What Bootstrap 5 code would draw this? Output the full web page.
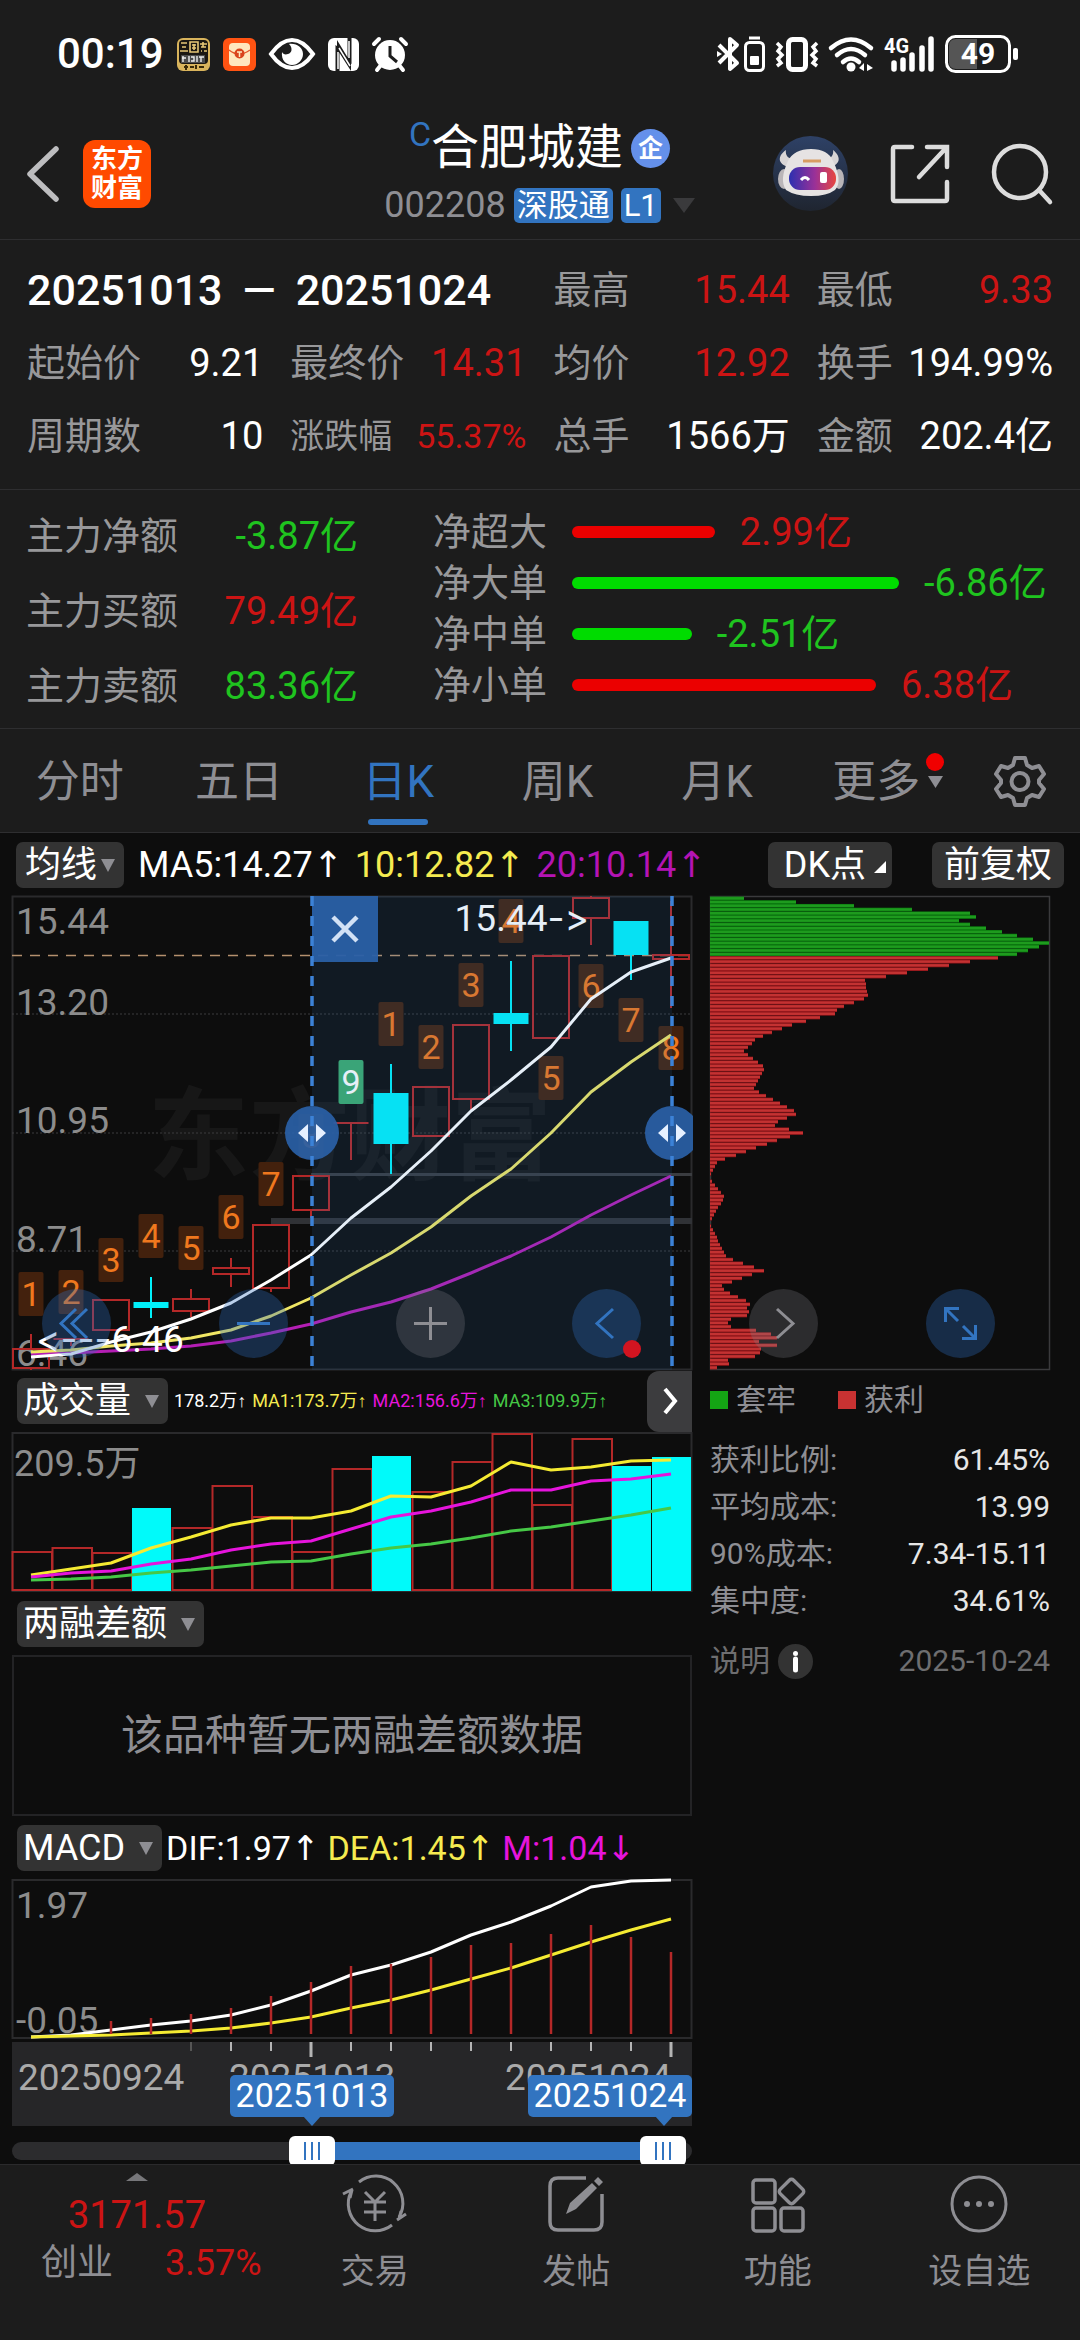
<!DOCTYPE html>
<html lang="zh-CN" data-bs-theme="dark">
<head>
<meta charset="utf-8">
<meta name="viewport" content="width=device-width, initial-scale=1">
<title>合肥城建 002208</title>
<link href="https://cdn.jsdelivr.net/npm/bootstrap@5.3.0/dist/css/bootstrap.min.css" rel="stylesheet">
<style>
:root{--panel:#1c1c1c;--ink:#0d0d0d;--line:#2e2e30;--muted:#8e8e93;--up:#cc1414;--down:#1fc41f;--blue:#3274c0}
body{background:var(--ink);color:#fff;font-family:Roboto,"Noto Sans CJK SC",sans-serif;font-size:38px;line-height:44px}
svg{display:block;flex:none;overflow:visible}
button{font:inherit;color:inherit}
.panel{background:var(--panel)}
.rule{border-bottom:1px solid var(--line)}
.muted{color:var(--muted)}
.label-c{color:#98989a}
.up{color:var(--up)}
.down{color:var(--down)}
.s30{font-size:30px}.s34{font-size:34px}.s36{font-size:36px}.s38{font-size:38px}

.status{height:108px;padding:0 62px 0 57px;font-size:42px;font-weight:500}
.status-l{gap:13px}
.status-r{gap:11px}
.topbar{height:132px;padding:0 28px 0 27px;display:grid;grid-template-columns:1fr auto 1fr;align-items:center}
.logo{width:68px;height:68px;border-radius:12px;background:#ff4a00;font-size:26px;line-height:29px;font-weight:700}
.title{font-size:48px;line-height:56px}
.title sup{font-size:34px;color:var(--blue);top:-18px;line-height:0}
.corp{width:39px;height:39px;border-radius:50%;background:#6490ea;font-size:25px;line-height:39px;font-weight:700}
.tagx{background:var(--blue);border-radius:5px;font-size:31px;line-height:35px;padding:0 3px}
.names{gap:7px}
.tools{gap:42px}

.stats{display:grid;grid-template-columns:repeat(4,1fr);column-gap:27px;row-gap:29px;padding:28px 27px 31px}
.span2{grid-column:span 2;font-size:43px;font-weight:500;gap:20px}
.flow{padding:20px 27px 20px 26px}
.flow-l{width:332px;gap:31px;padding:4px 0 0}
.flow-r{margin-left:75px;gap:7px}
.meter{height:12px;border-radius:6px;flex:none}
.meter-up{background:#eb0000}.meter-down{background:#00dc00}
.row-gap{gap:25px}

.tabs{height:104px;font-size:44px}
.tabs a{flex:1;color:var(--muted);text-decoration:none;text-align:center;line-height:106px;height:103px;position:relative}
.tabs a.on{color:var(--blue)}
.tabs a.on::after{content:"";position:absolute;left:50%;bottom:7px;width:60px;height:6px;margin-left:-30px;border-radius:3px;background:var(--blue)}
.tabs a.more{padding-right:4px}
.more-mark{position:absolute;left:129px;top:24px}
.gear{width:120px}

.chip{background:#333;border:0;border-radius:7px;height:46px;line-height:46px;font-size:36px;padding:0 9px 0 6px;white-space:nowrap}
.chip-ma{padding:0 9px;margin-right:14px}
.chip-dk{padding:0 6px 0 16px}
.chip-fq{padding:0 12px;margin-left:40px}
.caret{display:inline-block;border:7px solid transparent;border-top:13px solid var(--muted);border-bottom:0;vertical-align:5px;margin-left:14px}
.chip-ma .caret{margin-left:4px}
.mabar{height:63px;padding:0 16px}
.mavals{gap:12px}
.macdvals{gap:8px;margin-left:4px}
.ar{font-family:"DejaVu Sans",sans-serif}
.vals .ar{font-family:"Liberation Sans",sans-serif}
.y{color:#f5eb50}.m{color:#e614dc}.m2{color:#b414b4}.g{color:#46c846}
.board{display:grid;grid-template-columns:2fr 1fr;column-gap:18px;padding:0 30px 0 12px}
.board svg.plot{width:100%;height:auto}
.head{height:63px;padding-left:5px}
.head-vol{height:62px}
.vals{font-size:18px;gap:6px;margin-left:6px}
.nextbtn{width:45px;height:61px;border:0;border-radius:12px 0 0 12px;background:#3c3c3e}
.nodata{height:161px;border:2px solid #232325;font-size:42px;color:var(--muted)}
.floats{left:42px;right:85px;top:393px}
.fab{width:69px;height:69px;border-radius:50%;border:0;padding:0;background:rgba(45,110,190,.33)}
.fab.grey{background:rgba(130,130,135,.27)}
.reddot{width:18px;height:18px;border-radius:50%;background:#d21420;right:0;bottom:0}
.ranges{height:37px;overflow:hidden;position:relative}
.ranges .rail{position:absolute;left:0;right:0;top:15px;height:18px;border-radius:9px;background:#2c2c2e}
.ranges .fill{position:absolute;top:0;bottom:0;background:var(--blue)}
.ranges input{position:absolute;left:0;top:9px;width:100%;height:30px;margin:0;background:none;-webkit-appearance:none;appearance:none;pointer-events:none}
.ranges input::-webkit-slider-runnable-track{height:30px;background:none}
.ranges input::-webkit-slider-thumb{-webkit-appearance:none;pointer-events:auto;width:46px;height:30px;border-radius:6px;background:linear-gradient(var(--blue),var(--blue)) 15px 6px/2px 18px no-repeat,linear-gradient(var(--blue),var(--blue)) 22px 6px/2px 18px no-repeat,linear-gradient(var(--blue),var(--blue)) 29px 6px/2px 18px no-repeat,#fff}
.legend-sq{width:18px;height:18px}
.sq-g{background:#14a514}.sq-r{background:#c83232}
.legend-row{gap:42px}
.facts{gap:3px;font-size:30px}
.facts dt{font-weight:400;color:var(--muted)}
.facts dd{margin:0;color:#e6e6e6}
.info{width:35px;height:35px;border-radius:50%;border:0;background:#333;padding:0}
.dim{color:#6e6e70}

.dock{height:176px;border-top:1px solid #2a2a2c;font-size:34px}
.dock a{flex:1;color:var(--muted);text-decoration:none}
.dock .index{flex:none;width:274px}
.dock a.item{padding-top:9px;gap:15px}
.index-row{padding-left:41px;gap:52px}
text{font-family:Roboto,"Noto Sans CJK SC",sans-serif}
.pt-mark{font-family:Inter,sans-serif;font-variant-ligatures:none;font-feature-settings:"calt" 0}
</style>
<script src="https://cdn.jsdelivr.net/npm/bootstrap@5.3.0/dist/js/bootstrap.bundle.min.js"></script>
</head>
<body class="d-flex flex-column min-vh-100">

<div class="panel status d-flex align-items-center justify-content-between">
  <div class="d-flex align-items-center status-l">
    <span>00:19</span>
    <svg width="33" height="33" viewBox="0 0 33 33"><rect width="33" height="33" rx="6" fill="#d9b45c"/><rect x="2" y="2" width="29" height="24" rx="4" fill="#1b1712"/><path d="M4 5h6M5 9h4M3 13h8M13 4h8v10h-8zM15 7h4M15 10h4M17 6v6M23 6h7M26 4v5M24 9h5M24 13h1M27 13h3" stroke="#e7c777" stroke-width="1.6" fill="none"/><path d="M4 17h24v8H4z" fill="#4d4d4d"/><path d="M6 18v6M5 20h4M12 18v6M14 19h3v4h-3M20 18v6M22 19h5M24 19v5" stroke="#eee" stroke-width="1.4" fill="none"/><path d="M7 29h4M9 27v5M13 29h4M19 27v4M22 29h5" stroke="#3a2a08" stroke-width="2"/></svg>
    <svg width="33" height="33" viewBox="0 0 33 33"><rect width="33" height="33" rx="6" fill="#ff5312"/><rect x="6" y="5" width="21" height="23" rx="4" fill="#ffe7bd"/><path d="M6 12q10 8 21 0" stroke="#e4552a" fill="none" stroke-width="1.5"/><circle cx="16.500" cy="15.500" r="5" fill="#d9431c"/><path d="M14 14h5M16.500 14v5" stroke="#ffe7bd" stroke-width="1.5"/></svg>
    <svg width="46" height="34" viewBox="0 0 46 34"><path d="M2 17Q12 3 23 3t21 14Q34 31 23 31T2 17z" fill="none" stroke="#fff" stroke-width="4"/><path d="M20 7c4 4 3 9-1 10-3 1-5 0-6-2-1 8 4 13 10 13s11-5 11-11S28 6 20 7z" fill="#fff"/></svg>
    <svg width="31" height="33" viewBox="0 0 31 33"><rect width="31" height="33" rx="6" fill="#fff"/><path d="M7.500 33V7l4 3v23zM23.500 0v26l-4-3V0zM9 2l14 23v8L9 11z" fill="#1c1c1c"/><path d="M11 10l11 18M10 14v17M21 3v17" stroke="#fff" stroke-width="1.500" fill="none"/></svg>
    <svg width="36" height="34" viewBox="0 0 36 34"><circle cx="18" cy="18" r="15" fill="#fff"/><path d="M2 7l5-5M34 7l-5-5M5 33l4-5M31 33l-4-5" stroke="#fff" stroke-width="4" stroke-linecap="round"/><path d="M18 9v10l7 6" fill="none" stroke="#1c1c1c" stroke-width="3"/></svg>
  </div>
  <div class="d-flex align-items-center status-r">
    <svg width="48" height="36" viewBox="0 0 48 36" fill="none" stroke="#fff" stroke-width="4"><path d="M2 9l18 18-7 6V3l7 6L2 27" stroke-linejoin="round"/><path d="M0 15l5 3-5 3z" fill="#fff" stroke="none"/><rect x="28.500" y="6.500" width="18" height="28" rx="4" stroke-width="3"/><path d="M32 2h11" stroke-width="3"/><rect x="33" y="20" width="9" height="9" rx="1" fill="#fff" stroke="none"/></svg>
    <svg width="42" height="35" viewBox="0 0 42 35" fill="none" stroke="#fff"><rect x="12.500" y="2.500" width="17" height="30" rx="4" stroke-width="5"/><path d="M1 6l4 4-3 4 4 4-4 4 3 4-4 3M41 6l-4 4 3 4-4 4 4 4-3 4 4 3" stroke-width="3.500"/></svg>
    <svg width="44" height="35" viewBox="0 0 44 35" fill="none" stroke="#fff" stroke-width="4.500" stroke-linecap="round"><path d="M2 11Q22-6 42 11M8 18q14-12 28 0M14 25q8-7 16 0"/><circle cx="22" cy="30" r="4.500" fill="#fff" stroke="none"/><path d="M30 31l5-5v8zM44 31l-6-4v7z" fill="#fff" stroke="none"/></svg>
    <svg width="50" height="36" viewBox="0 0 50 36"><text x="0" y="17" font-size="20" font-weight="700" fill="#fff">4G</text><path d="M10 27v6M19 24v9M28 19v14M38 12v21M47 3v30" stroke="#fff" stroke-width="5.500" stroke-linecap="round"/></svg>
    <svg width="73" height="38" viewBox="0 0 73 38"><rect x="1.500" y="1.500" width="63" height="35" rx="9" fill="none" stroke="#fff" stroke-width="3"/><path d="M11 4h21v30H11q-7 0-7-7V11q0-7 7-7z" fill="#555"/><rect x="68" y="13" width="5" height="12" rx="2" fill="#fff"/><text x="33" y="29" text-anchor="middle" font-size="30" font-weight="700" fill="#fff">49</text></svg>
  </div>
</div>

<header class="panel rule topbar">
  <div class="d-flex align-items-center gap-4">
    <a href="#" aria-label="返回"><svg width="32" height="56" viewBox="0 0 32 56"><path d="M29 3L3 28l26 25" fill="none" stroke="#bdbdbf" stroke-width="5.500" stroke-linecap="round" stroke-linejoin="round"/></svg></a>
    <div class="logo text-center d-flex flex-column justify-content-center"><span>东方</span><span>财富</span></div>
  </div>
  <div class="d-flex flex-column align-items-center names">
    <div class="title d-flex align-items-center gap-2"><span><sup>C</sup>合肥城建</span><span class="corp text-center">企</span></div>
    <div class="d-flex align-items-center gap-2 muted s36"><span>002208</span><span class="tagx text-white">深股通</span><span class="tagx text-white">L1</span>
      <svg class="ms-1" width="22" height="15"><path d="M0 0h22L11 15z" fill="#3a3a3c"/></svg></div>
  </div>
  <div class="d-flex align-items-center justify-content-end tools">
    <button class="btn p-0 border-0" aria-label="智能助手"><svg width="75" height="75" viewBox="0 0 75 75"><defs><linearGradient id="bg" x2="0" y2="1"><stop stop-color="#2e4166"/><stop offset="1" stop-color="#1f2530"/></linearGradient><linearGradient id="vis"><stop stop-color="#2c2fb0"/><stop offset=".55" stop-color="#9a3198"/><stop offset="1" stop-color="#e8463e"/></linearGradient></defs><circle cx="37.500" cy="37.500" r="37.500" fill="url(#bg)"/><path d="M13 14c-10 7-7 15 3 17l5-8c-6 0-9-4-8-9zM60 14c9 7 7 15-3 17l-5-8c6 0 9-4 8-9z" fill="#d8d5d6"/><ellipse cx="11" cy="43" rx="6" ry="10" fill="#b9b5b8"/><ellipse cx="66" cy="43" rx="5" ry="10" fill="#b9b5b8"/><path d="M15 25q6-12 23-12t22 12q10 20 2 29-8 6-24 6t-25-6q-7-10 2-29z" fill="#e6e3e3"/><path d="M30 25h18" stroke="#d89c62" stroke-width="3"/><rect x="16" y="31" width="47" height="23" rx="11" fill="url(#vis)"/><path d="M28 44q4-5 8 0" fill="none" stroke="#fff" stroke-width="3"/><rect x="47" y="36" width="7" height="11" rx="2" fill="#fff"/></svg></button>
    <button class="btn p-0 border-0" aria-label="分享"><svg width="60" height="60" viewBox="0 0 60 60" fill="none" stroke="#dcdcdc" stroke-width="4.500" stroke-linecap="round"><path d="M22 3H5q-2 0-2 2v50q0 2 2 2h50q2 0 2-2V38M37 3h20v20M56 4L29 33"/></svg></button>
    <button class="btn p-0 border-0" aria-label="搜索"><svg width="60" height="62" viewBox="0 0 60 62" fill="none" stroke="#dcdcdc" stroke-width="4.500" stroke-linecap="round"><circle cx="28" cy="29" r="26"/><path d="M47 47l11 12"/></svg></button>
  </div>
</header>

<section class="panel rule stats">
  <div class="span2 d-flex"><span>20251013</span><span>—</span><span>20251024</span></div>
  <div class="d-flex justify-content-between"><span class="label-c">最高</span><span class="up">15.44</span></div>
  <div class="d-flex justify-content-between"><span class="label-c">最低</span><span class="up">9.33</span></div>
  <div class="d-flex justify-content-between"><span class="label-c">起始价</span><span>9.21</span></div>
  <div class="d-flex justify-content-between"><span class="label-c">最终价</span><span class="up">14.31</span></div>
  <div class="d-flex justify-content-between"><span class="label-c">均价</span><span class="up">12.92</span></div>
  <div class="d-flex justify-content-between"><span class="label-c">换手</span><span>194.99%</span></div>
  <div class="d-flex justify-content-between"><span class="label-c">周期数</span><span>10</span></div>
  <div class="d-flex justify-content-between s34"><span class="label-c">涨跌幅</span><span class="up">55.37%</span></div>
  <div class="d-flex justify-content-between"><span class="label-c">总手</span><span>1566万</span></div>
  <div class="d-flex justify-content-between"><span class="label-c">金额</span><span>202.4亿</span></div>
</section>

<section class="panel rule flow d-flex">
  <div class="flow-l d-flex flex-column">
    <div class="d-flex justify-content-between"><span class="label-c">主力净额</span><span class="down">-3.87亿</span></div>
    <div class="d-flex justify-content-between"><span class="label-c">主力买额</span><span class="up">79.49亿</span></div>
    <div class="d-flex justify-content-between"><span class="label-c">主力卖额</span><span class="down">83.36亿</span></div>
  </div>
  <div class="flow-r flex-grow-1 d-flex flex-column">
    <div class="d-flex row-gap"><span class="label-c">净超大</span><div class="flex-grow-1 d-flex align-items-center row-gap"><div class="meter meter-up" style="width:29.7%"></div><span class="up">2.99亿</span></div></div>
    <div class="d-flex row-gap"><span class="label-c">净大单</span><div class="flex-grow-1 d-flex align-items-center row-gap"><div class="meter meter-down" style="width:68%"></div><span class="down">-6.86亿</span></div></div>
    <div class="d-flex row-gap"><span class="label-c">净中单</span><div class="flex-grow-1 d-flex align-items-center row-gap"><div class="meter meter-down" style="width:24.9%"></div><span class="down">-2.51亿</span></div></div>
    <div class="d-flex row-gap"><span class="label-c">净小单</span><div class="flex-grow-1 d-flex align-items-center row-gap"><div class="meter meter-up" style="width:63.2%"></div><span class="up">6.38亿</span></div></div>
  </div>
</section>

<nav class="panel rule tabs d-flex align-items-center">
  <a href="#">分时</a><a href="#">五日</a><a href="#" class="on" aria-current="page">日K</a><a href="#">周K</a><a href="#">月K</a>
  <a href="#" class="more">更多<svg class="more-mark" width="18" height="36"><circle cx="9" cy="9" r="9" fill="#f00000"/><path d="M2 23h15l-7.500 12z" fill="#8e8e93"/></svg></a>
  <button class="btn gear p-0 border-0 d-flex justify-content-center" aria-label="设置"><svg width="52" height="52" viewBox="0 0 52 52" fill="none" stroke="#8e8e93" stroke-width="4" stroke-linejoin="round"><path d="M21 3h10l2 7 5 3 7-2 5 8-5 6v3l5 6-5 8-7-2-5 3-2 7H21l-2-7-5-3-7 2-5-8 5-6v-3l-5-6 5-8 7 2 5-3z"/><circle cx="26" cy="26.500" r="8.500"/></svg></button>
</nav>

<div class="mabar d-flex align-items-center s36 text-nowrap">
  <button class="chip chip-ma">均线<span class="caret"></span></button>
  <div class="d-flex mavals">
    <span>MA5:14.27<span class="ar">↑</span></span>
    <span class="y">10:12.82<span class="ar">↑</span></span>
    <span class="m2">20:10.14<span class="ar">↑</span></span>
  </div>
  <button class="chip chip-dk ms-auto">DK点<svg class="d-inline-block ms-2" width="12" height="12"><path d="M12 0v12H0z" fill="#fff"/></svg></button>
  <button class="chip chip-fq">前复权</button>
</div>

<main class="board position-relative">
  <div>
    <svg class="plot" id="kline" viewBox="12 897 680 474" role="img" aria-label="日K线"></svg>
    <div class="head head-vol d-flex align-items-center text-nowrap">
      <button class="chip">成交量<span class="caret"></span></button>
      <div class="vals d-flex"><span>178.2万<span class="ar">↑</span></span><span class="y">MA1:173.7万<span class="ar">↑</span></span><span class="m">MA2:156.6万<span class="ar">↑</span></span><span class="g">MA3:109.9万<span class="ar">↑</span></span></div>
      <button class="nextbtn ms-auto p-0 d-flex align-items-center justify-content-center" aria-label="下一组"><svg width="16" height="30"><path d="M3 3l10 12L3 27" fill="none" stroke="#fff" stroke-width="4"/></svg></button>
    </div>
    <svg class="plot" id="volume" viewBox="12 1433 680 160" role="img" aria-label="成交量"></svg>
    <div class="head d-flex align-items-center"><button class="chip">两融差额<span class="caret"></span></button></div>
    <div class="nodata d-flex align-items-center justify-content-center">该品种暂无两融差额数据</div>
    <div class="head d-flex align-items-center text-nowrap">
      <button class="chip">MACD<span class="caret"></span></button>
      <div class="d-flex macdvals s34"><span>DIF:1.97<span class="ar">↑</span></span><span class="y">DEA:1.45<span class="ar">↑</span></span><span class="m">M:1.04<span class="ar">↓</span></span></div>
    </div>
    <svg class="plot" id="macd" viewBox="12 1880 680 248" role="img" aria-label="MACD"></svg>
    <div class="ranges">
      <div class="rail"><div class="fill" id="fill"></div></div>
      <input type="range" id="from" min="0" max="1000" value="437" aria-label="开始日期">
      <input type="range" id="to" min="0" max="1000" value="991" aria-label="结束日期">
    </div>
  </div>
  <div>
    <svg class="plot" id="chips" viewBox="711 897 340 474" role="img" aria-label="筹码分布"></svg>
    <div class="d-flex s30 muted pt-2 pb-3 legend-row">
      <span class="d-flex align-items-center gap-2"><i class="legend-sq sq-g"></i>套牢</span>
      <span class="d-flex align-items-center gap-2"><i class="legend-sq sq-r"></i>获利</span>
    </div>
    <dl class="facts d-flex flex-column mb-0">
      <div class="d-flex justify-content-between"><dt>获利比例:</dt><dd>61.45%</dd></div>
      <div class="d-flex justify-content-between"><dt>平均成本:</dt><dd>13.99</dd></div>
      <div class="d-flex justify-content-between"><dt>90%成本:</dt><dd>7.34-15.11</dd></div>
      <div class="d-flex justify-content-between"><dt>集中度:</dt><dd>34.61%</dd></div>
    </dl>
    <div class="d-flex justify-content-between s30 dim mt-3"><span class="d-flex align-items-center gap-2">说明<button class="info" aria-label="说明"><svg width="35" height="35"><circle cx="17.500" cy="9.500" r="2.500" fill="#fff"/><path d="M17.500 15v11" stroke="#fff" stroke-width="5" stroke-linecap="round"/></svg></button></span><span>2025-10-24</span></div>
  </div>
  <div class="floats position-absolute d-flex justify-content-between">
    <button class="fab" aria-label="最早"><svg width="69" height="69" fill="none" stroke="#3274c0" stroke-width="3"><path d="M34 20L19 34.500 34 49M45 20L30 34.500 45 49"/></svg></button>
    <button class="fab" aria-label="缩小"><svg width="69" height="69"><path d="M18 34.500h33" stroke="#3274c0" stroke-width="3"/></svg></button>
    <button class="fab grey" aria-label="放大"><svg width="69" height="69"><path d="M18 34.500h33M34.500 18v33" stroke="#8e8e93" stroke-width="3"/></svg></button>
    <button class="fab position-relative" aria-label="前移"><svg width="69" height="69"><path d="M41 20L25 34.500 41 49" fill="none" stroke="#3274c0" stroke-width="3"/></svg><span class="reddot position-absolute"></span></button>
    <button class="fab grey" aria-label="后移"><svg width="69" height="69"><path d="M28 20l16 14.500L28 49" fill="none" stroke="#8e8e93" stroke-width="3"/></svg></button>
    <button class="fab" aria-label="全屏"><svg width="69" height="69" fill="none" stroke="#3274c0" stroke-width="3"><path d="M33 19.500H19.500V33M20 20l12 12M36 49.500h13.500V36M49 49L37 37"/></svg></button>
  </div>
</main>

<nav class="panel dock d-flex mt-auto">
  <a href="#" class="index d-flex flex-column align-items-center">
    <svg class="mt-2" width="22" height="8"><path d="M0 8L11 0l11 8z" fill="#77777a"/></svg>
    <span class="up mt-2 pt-1 s38">3171.57</span>
    <span class="d-flex pt-1 align-self-stretch index-row s36"><span>创业</span><span class="up">3.57%</span></span>
  </a>
  <a href="#" class="item d-flex flex-column align-items-center"><svg width="66" height="60" viewBox="0 0 66 60" fill="none" stroke="#8e8e93" stroke-width="3"><path d="M17 8A27 27 0 0 1 57 43M55 46l9-6M57 45l2-8M50 51A27 27 0 0 1 9 18M1 20l10-5M10 16l-2 8"/><path d="M23 18l10 10 10-10M33 28v19M22 28h22M22 38h22"/></svg>交易</a>
  <a href="#" class="item d-flex flex-column align-items-center"><svg width="60" height="60" viewBox="0 0 60 60"><path d="M40 4H12q-8 0-8 8v36q0 8 8 8h36q8 0 8-8V20" fill="none" stroke="#8e8e93" stroke-width="3.500"/><path d="M20 40l4-11 22-20 5 5-21 21zM48 7l4-4 5 5-4 4z" fill="#8e8e93"/></svg>发帖</a>
  <a href="#" class="item d-flex flex-column align-items-center"><svg width="60" height="60" viewBox="0 0 60 60" fill="none" stroke="#8e8e93" stroke-width="3.500"><rect x="5" y="6" width="22" height="23" rx="3"/><rect x="5" y="34" width="22" height="23" rx="3"/><rect x="33" y="34" width="22" height="23" rx="3"/><rect x="34" y="8" width="19" height="19" rx="3" transform="rotate(45 43.500 17.500)"/></svg>功能</a>
  <a href="#" class="item d-flex flex-column align-items-center"><svg width="60" height="60" viewBox="0 0 60 60"><circle cx="30" cy="30" r="27" fill="none" stroke="#8e8e93" stroke-width="3"/><g fill="#8e8e93"><circle cx="18" cy="30" r="3"/><circle cx="30" cy="30" r="3"/><circle cx="42" cy="30" r="3"/></g></svg>设自选</a>
</nav>

<script>
const RED='#b42828', CYAN='#00f0fa', GREY='#8c8c8c';
const cx = k => 31 + 40 * k;
const rect = (x,y,w,h,a='') => `<rect x="${x}" y="${y}" width="${w}" height="${h}" ${a}/>`;
const seg = (x1,y1,x2,y2,c,w=2,a='') => `<path d="M${x1} ${y1}L${x2} ${y2}" stroke="${c}" stroke-width="${w}" ${a}/>`;
const line = (ys,c,w=3) => `<polyline points="${ys.map((y,k)=>cx(k)+','+y).join(' ')}" fill="none" stroke="${c}" stroke-width="${w}" stroke-linejoin="round"/>`;
const txt = (x,y,s,c=GREY,size=37,a='') => `<text x="${x}" y="${y}" font-size="${size}" fill="${c}" ${a}>${s}</text>`;

/* candles: high, body top, body bottom, low, falling */
const candles = [[1335,1350,1369,1371],[1340,1340,1341,1347],[1301,1301,1331,1331],[1278,1303,1309,1319,1],[1290,1300,1312,1318],[1259,1269,1275,1288],[1226,1226,1289,1293],[1177,1177,1211,1219],[1124,1124,1125,1161],[1065,1094,1145,1175,1],[1088,1088,1137,1137],[1026,1026,1100,1113],[962,1014,1025,1052,1],[957,957,1039,1039],[897,899,919,946],[922,922,956,981,1],[902,956,960,1009]];
const marks = [[1,1273],[2,1271],[3,1239],[4,1215],[5,1227],[6,1196],[7,1163],[8,1115],[9,1061],[1,1003],[2,1026],[3,964],[4,900],[5,1057],[6,965],[7,999],[8,1027]];
const ma5=[1358,1355,1343,1333,1320,1304,1281,1256,1219,1188,1152,1112,1081,1048,1000,973,959];
const ma10=[1353,1351,1347,1344,1339,1331,1317,1299,1276,1254,1228,1197,1170,1134,1093,1063,1036];
const ma20=[1355,1354,1352,1350,1347,1342,1334,1325,1313,1303,1290,1274,1257,1238,1216,1196,1177];

let s = rect(12.5,897.5,679,473,'fill="none" stroke="#2a2a2c" stroke-width="2"');
s += txt(148,1173,'东方财富','#fff',101,'font-weight="700" opacity=".04"');
[1015,1134,1252].forEach(y => s += seg(12,y,692,y,'#3c3c3e',1,'stroke-dasharray="2 2"'));
s += rect(311,1174,381,3,'fill="#3a3c40"') + rect(271,1219,421,6,'fill="#303236"');
s += seg(12,956.5,692,956.5,'#b4906e',1.5,'stroke-dasharray="10 8"');
[[15.44,935],[13.20,1016],[10.95,1134],[8.71,1253],[6.46,1367]].forEach(([v,y]) => s += txt(16,y,v.toFixed(2)));
marks.forEach(([n,y],k) => s += rect(cx(k)-12.5,y,25,44,`rx="2" fill="${n==9?'#3caa6e':'#43210d'}"`) + txt(cx(k),y+34,n,n==9?'#fff':'#f0781e',34,'text-anchor="middle"'));
candles.forEach(([h,t,b,l,fall],k) => {
  const x = cx(k);
  if (fall) s += seg(x,h,x,l,CYAN) + rect(x-17.5,t,35,b-t,`fill="${CYAN}"`);
  else s += seg(x,h,x,t,RED) + seg(x,b,x,l,RED) + (b-t<2 ? seg(x-17.5,t,x+17.5,t,RED) : rect(x-18,t,36,b-t,`fill="none" stroke="${RED}" stroke-width="2"`));
});
s += line(ma20,'#b41eb4') + line(ma10,'#f0e664') + line(ma5,'#fff');
s += txt(36,1353,'<tspan class="pt-mark">&lt;---</tspan>6.46','#fff') + txt(589,932,'15.44<tspan class="pt-mark">-&gt;</tspan>','#fff',37,'text-anchor="end"');
s += rect(312,897,360,474,'fill="#3278c8" fill-opacity=".12"') + rect(312,897,66,66,'fill="#2a60a6" fill-opacity=".95"');
s += '<path d="M333 918l24 24M357 918l-24 24" stroke="#d2e1f5" stroke-width="4.5"/>';
s += '<clipPath id="inPlot"><rect x="12" y="897" width="681" height="474"/></clipPath><g clip-path="url(#inPlot)">';
[312,672].forEach(x => {
  s += `<circle cx="${x}" cy="1134" r="27" fill="#2a60a6" fill-opacity=".93"/>` + seg(x,897,x,1371,'#3c82d7',3.5,'stroke-dasharray="10 10"');
  s += `<path d="M${x-4} 1125v18l-10-9zM${x+4} 1125v18l10-9z" fill="#e6f0ff"/>`;
});
s += '</g>';
kline.innerHTML = s;

/* turnover bars */
const vol=[1553,1549,1554,1509,1529,1487,1518,1553,1470,1457,1493,1463,1435,1506,1440,1467,1458], falls=[3,9,15,16];
s = rect(12.5,1434,679,158,'fill="none" stroke="#2a2a2c" stroke-width="2"') + txt(14,1477,'209.5万',GREY,36);
vol.forEach((y,k) => s += falls.includes(k) ? rect(12+40*k,y,39,1592-y,'fill="#00fafa"') : rect(12.5+40*k,y,39.5,1591-y,`fill="none" stroke="${RED}" stroke-width="2"`));
s += line([1576,1570,1564,1549,1538,1526,1519,1519,1512,1497,1498,1487,1463,1471,1468,1462,1461],'#f5eb32');
s += line([1578,1574,1572,1565,1560,1551,1545,1542,1530,1518,1512,1503,1491,1491,1482,1480,1475],'#e614dc');
s += line([1581,1580,1578,1574,1571,1567,1563,1562,1555,1549,1545,1539,1532,1528,1522,1516,1509],'#46c846');
volume.innerHTML = s;

/* MACD and date axis */
s = rect(12.5,1881,679,158,'fill="none" stroke="#2a2a2c" stroke-width="2"') + txt(16,1919,'1.97') + txt(16,2034,'-0.05');
s += line([2038,2036,2031,2026,2022,2016,2006,1992,1976,1966,1953,1936,1923,1907,1888,1882,1881],'#fff');
s += line([2038,2037,2036,2034,2032,2029,2024,2018,2009,2001,1991,1980,1969,1956,1943,1931,1920],'#f5eb32');
[2033,2031,2022,2019,2015,2009,1997,1983,1967,1965,1958,1946,1944,1935,1926,1938,1953].forEach((y,k) => { if (k>1) s += seg(cx(k),y,cx(k),2035,RED,2.5); });
s += rect(12,2043,680,84,'fill="#262628"');
for (let k=4;k<17;k++) { const big = k==7||k==16; s += seg(cx(k),2043,cx(k),big?2058:2052,k==4?'#555':'#b4b4b4',big?3:2); }
s += txt(18,2091,'20250924','#aaa') + txt(229,2091,'20251013','#aaa') + txt(505,2091,'20251024','#aaa');
[[230,312,'20251013'],[528,664,'20251024']].forEach(([x,p,d]) => {
  s += rect(x,2076,164,42,'rx="5" fill="#3274c0"') + `<path d="M${p-9} 2117h18l-9 10z" fill="#3274c0"/>` + txt(x+82,2108,d,'#fff',34,'text-anchor="middle"');
});
macd.innerHTML = s;

/* cost distribution */
const trapped=[34,86,144,202,260,266,249,260,276,292,307,323,339,329,318,307];
const profit=[288,260,239,218,197,176,155,156,156,157,158,154,144,134,127,125,110,96,82,72,62,53,45,42,38,34,38,43,48,53,54,52,50,48,46,44,49,56,63,70,77,84,86,77,68,65,79,93,80,67,57,46,36,26,15,7,5,3,1,0,2,5,8,11,14,13,11,8,6,4,2,0,1,3,5,7,8,10,12,14,16,23,33,44,54,42,32,22,12,14,20,28,36,40,37,39,37,21,18,21,46,61,67,49,67,51,50,45,18,19,7];
const step = 473/127;
s = rect(711.5,897.5,339,473,'fill="none" stroke="#3a3a3c" stroke-width="1.5"');
trapped.concat(profit).forEach((w,i) => {
  const g = i<trapped.length, y = 897.5+i*step;
  s += rect(711,y,w,step,`fill="${g?'#0a780f':'#8c1419'}"`) + rect(711,y+.6,w,2.4,`fill="${g?'#1e9b1e':'#c33232'}"`);
});
chips.innerHTML = s;

/* selected range between the two thumbs (46px wide) */
function paint(){
  const rail = fill.parentElement.clientWidth, at = v => 23 + v/1000*(rail-46);
  fill.style.left = at(+from.value)+'px';
  fill.style.right = (rail-at(+to.value))+'px';
}
const fill = document.getElementById('fill'), from = document.getElementById('from'), to = document.getElementById('to');
from.oninput = to.oninput = window.onresize = paint;
paint();
</script>
</body>
</html>
